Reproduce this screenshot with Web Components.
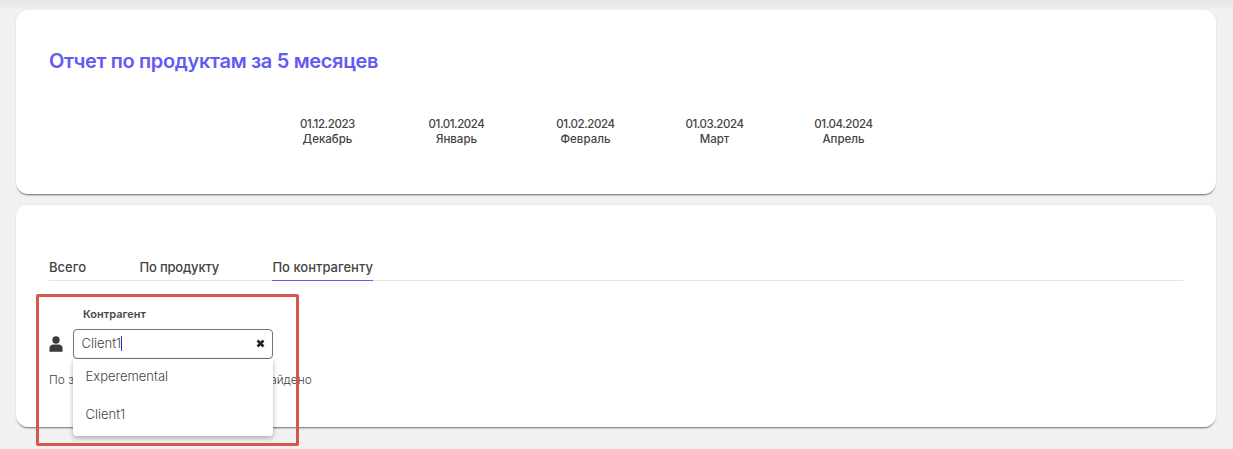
<!DOCTYPE html>
<html lang="ru">
<head>
<meta charset="utf-8">
<title>Отчет</title>
<style>
  html, body { margin: 0; height: 449px; overflow: hidden; }
  body {
    background: #f1f1f1;
    font-family: Inter, "Noto Sans", sans-serif;
    color: #3a3a3a;
    position: relative;
  }
  body::before {
    content: '';
    position: absolute;
    left: 0; right: 0; top: 0; height: 10px;
    background: linear-gradient(#e6e6e6, #f1f1f1);
  }
  main { position: relative; display: flex; flex-direction: column; gap: 11px; padding: 10px 17px 0 16px; }
</style>
</head>
<body>
<main>
  <report-card style="height:184px">
    <report-head title="Отчет по продуктам за 5 месяцев"></report-head>
    <month-row>
      <month-col date="01.12.2023" name="Декабрь"></month-col>
      <month-col date="01.01.2024" name="Январь"></month-col>
      <month-col date="01.02.2024" name="Февраль"></month-col>
      <month-col date="01.03.2024" name="Март"></month-col>
      <month-col date="01.04.2024" name="Апрель"></month-col>
    </month-row>
  </report-card>
  <report-card style="height:222px">
    <tab-bar>
      <tab-item>Всего</tab-item>
      <tab-item style="letter-spacing:-.2px">По продукту</tab-item>
      <tab-item active>По контрагенту</tab-item>
    </tab-bar>
    <client-filter label="Контрагент" value="Client1"></client-filter>
    <empty-note>По заданным параметрам ничего не найдено</empty-note>
  </report-card>
</main>
<red-mark></red-mark>

<script>
class ReportCard extends HTMLElement {
  constructor() {
    super();
    this.attachShadow({ mode: 'open' });
    this.shadowRoot.innerHTML = `
      <style>
        :host {
          display: block;
          box-sizing: border-box;
          background: #fff;
          border-radius: 12px;
          padding: 0 33px;
          box-shadow: 0 2px 2px -1px rgba(0,0,0,0.55), 0 0 3px rgba(0,0,0,0.05);
        }
      </style>
      <slot></slot>
    `;
  }
}

class ReportHead extends HTMLElement {
  constructor() {
    super();
    this.attachShadow({ mode: 'open' });
  }
  connectedCallback() {
    this.shadowRoot.innerHTML = `
      <style>
        :host { display: block; padding-top: 38px; }
        h2 { margin: 0; font-size: 20px; line-height: 26px; font-weight: 600; color: #6359f5; letter-spacing: -0.33px; }
      </style>
      <h2>${this.getAttribute('title')}</h2>
    `;
  }
}

class MonthRow extends HTMLElement {
  constructor() {
    super();
    this.attachShadow({ mode: 'open' });
    this.shadowRoot.innerHTML = `
      <style>
        :host { display: grid; grid-template-columns: repeat(5, 129px); padding: 42px 0 0 214px; }
      </style>
      <slot></slot>
    `;
  }
}

class MonthCol extends HTMLElement {
  constructor() {
    super();
    this.attachShadow({ mode: 'open' });
  }
  connectedCallback() {
    this.shadowRoot.innerHTML = `
      <style>
        :host { display: block; text-align: center; font-size: 11.5px; line-height: 16px; font-weight: 500; color: #444; }
        .date { letter-spacing: -0.4px; }
        .name { margin-top: -1px; }
      </style>
      <div class="date">${this.getAttribute('date')}</div>
      <div class="name">${this.getAttribute('name')}</div>
    `;
  }
}

class TabBar extends HTMLElement {
  constructor() {
    super();
    this.attachShadow({ mode: 'open' });
    this.shadowRoot.innerHTML = `
      <style>
        :host { display: flex; gap: 53.5px; margin-top: 51px; height: 24px; border-bottom: 1px solid #e4e4e4; }
      </style>
      <slot></slot>
    `;
  }
}

class TabItem extends HTMLElement {
  constructor() {
    super();
    this.attachShadow({ mode: 'open' });
    this.shadowRoot.innerHTML = `
      <style>
        :host { display: block; height: 24px; font-size: 13px; line-height: 22px; font-weight: 500; color: #444; white-space: nowrap; }
        :host([active]) { border-bottom: 1px solid #6359f5; }
      </style>
      <slot></slot>
    `;
  }
}

class ClientFilter extends HTMLElement {
  constructor() {
    super();
    this.attachShadow({ mode: 'open' });
  }
  connectedCallback() {
    const label = this.getAttribute('label');
    const value = this.getAttribute('value');
    this.shadowRoot.innerHTML = `
      <style>
        :host { display: block; position: relative; z-index: 2; padding-top: 26px; }
        .label { margin-left: 34px; font-size: 11px; line-height: 14px; font-weight: 600; color: #4a4a4a; }
        .row { display: flex; align-items: center; gap: 10px; margin-top: 8px; }
        .row > svg { width: 14px; height: 16px; fill: #3a3a3a; }
        .field {
          box-sizing: border-box;
          position: relative;
          width: 200px; height: 30px;
          border: 1px solid #6f6f80;
          border-radius: 4px;
          display: flex; align-items: center;
          padding: 0 7px 0 7.5px;
          font-size: 13px;
          font-weight: 300;
          color: #444;
        }
        .value { margin-bottom: 3px; }
        .caret { display: inline-block; width: 1px; height: 15px; background: #2b35c9; margin-bottom: 1px; }
        .clear { margin-left: auto; margin-bottom: 1px; width: 9px; height: 9px; }
        .menu {
          position: absolute;
          left: 24px; top: 78px;
          width: 200px;
          box-sizing: border-box;
          padding-bottom: 2px;
          background: #fff;
          border-radius: 0 0 4px 4px;
          box-shadow: 0 2px 5px rgba(0,0,0,0.3);
          font-size: 13px;
          font-weight: 300;
          color: #444;
        }
        .menu div { height: 37.5px; line-height: 35px; padding-left: 12.5px; }
      </style>
      <div class="label">${label}</div>
      <div class="row">
        <svg viewBox="0 0 15 17"><circle cx="7.5" cy="4.2" r="3.9"/><path d="M0.5 16.8V13.2C0.5 10.6 2.4 9 4.6 9H10.4C12.6 9 14.5 10.6 14.5 13.2V16.8Z"/></svg>
        <div class="field">
          <span class="value">${value}</span><span class="caret"></span>
          <svg class="clear" viewBox="0 0 9 9"><path d="M1.5 1.5L7.5 7.5M7.5 1.5L1.5 7.5" stroke="#222" stroke-width="2.6" stroke-linecap="butt"/></svg>
        </div>
      </div>
      <div class="menu">
        <div>Experemental</div>
        <div>Client1</div>
      </div>
    `;
  }
}

class EmptyNote extends HTMLElement {
  constructor() {
    super();
    this.attachShadow({ mode: 'open' });
    this.shadowRoot.innerHTML = `
      <style>
        :host { display: block; margin-top: 14px; font-size: 11.87px; font-weight: 300; line-height: 15px; color: #444; }
      </style>
      <slot></slot>
    `;
  }
}

class RedMark extends HTMLElement {
  constructor() {
    super();
    this.attachShadow({ mode: 'open' });
    this.shadowRoot.innerHTML = `
      <style>
        :host {
          position: absolute;
          left: 36px; top: 294px;
          width: 263px; height: 152px;
          box-sizing: border-box;
          border: 3px solid #d6574a;
          border-radius: 2px;
          z-index: 5;
          pointer-events: none;
        }
      </style>
    `;
  }
}

customElements.define('report-card', ReportCard);
customElements.define('report-head', ReportHead);
customElements.define('month-row', MonthRow);
customElements.define('month-col', MonthCol);
customElements.define('tab-bar', TabBar);
customElements.define('tab-item', TabItem);
customElements.define('client-filter', ClientFilter);
customElements.define('empty-note', EmptyNote);
customElements.define('red-mark', RedMark);
</script>
</body>
</html>
